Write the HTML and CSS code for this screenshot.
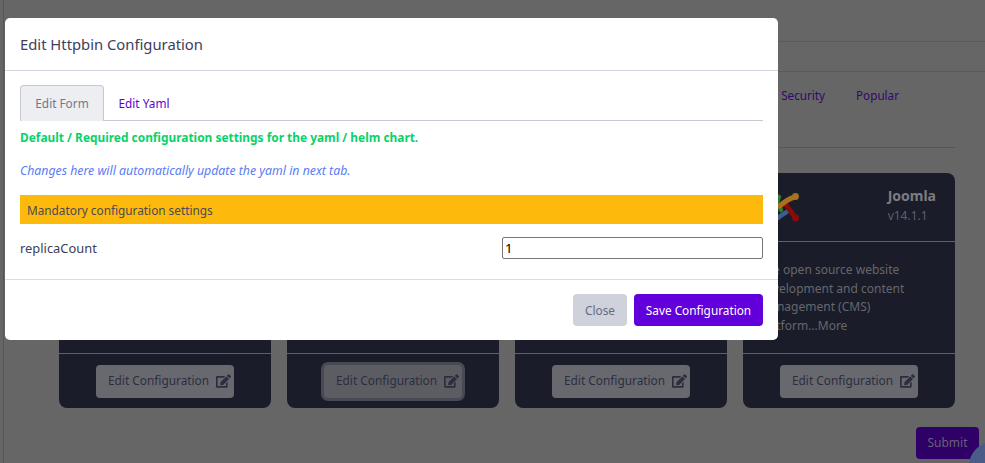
FILE: index.html
```html
<!DOCTYPE html>
<html lang="en">
<head>
<meta charset="utf-8">
<title>Edit Httpbin Configuration</title>
<link rel="stylesheet" href="styles.css">
</head>
<body>
<div class="page">
  <div class="rail"></div>
  <main class="main">
    <div class="topbar"></div>
    <div class="subbar"></div>
    <nav class="filters">
      <a>Security</a>
      <a>Popular</a>
    </nav>
    <div class="cards">
      <article class="card">
        <div class="card-head"></div>
        <div class="card-body"></div>
        <div class="card-foot"><button class="edit">Edit Configuration <svg class="edit-icon" viewBox="0 0 576 512"><use href="#pen"/></svg></button></div>
      </article>
      <article class="card">
        <div class="card-head"></div>
        <div class="card-body"></div>
        <div class="card-foot"><button class="edit focused">Edit Configuration <svg class="edit-icon" viewBox="0 0 576 512"><use href="#pen"/></svg></button></div>
      </article>
      <article class="card">
        <div class="card-head"></div>
        <div class="card-body"></div>
        <div class="card-foot"><button class="edit">Edit Configuration <svg class="edit-icon" viewBox="0 0 576 512"><use href="#pen"/></svg></button></div>
      </article>
      <article class="card">
        <div class="card-head">
          <svg class="logo" viewBox="0 0 34 34" fill="none" stroke-linecap="round">
            <path d="M13 6 C10 10 12 15 15 19" stroke="#2f7a2c" stroke-width="4.5"/>
            <path d="M12 27 C14 25 18 23 22 20" stroke="#3a5f8c" stroke-width="4.5"/>
            <path d="M20 14 L26 22 C27 24 28 26 30 27" stroke="#8c0a0a" stroke-width="5"/>
            <path d="M14 15 C18 11 22 8 29 6" stroke="#a8701f" stroke-width="5"/>
            <circle cx="29.5" cy="5.5" r="3.4" fill="#a8701f"/>
            <circle cx="29.5" cy="27" r="3.4" fill="#8c0a0a"/>
          </svg>
          <div class="card-title"><strong>Joomla</strong><span>v14.1.1</span></div>
        </div>
        <div class="card-body">The open source website development and content management (CMS) platform...More</div>
        <div class="card-foot"><button class="edit">Edit Configuration <svg class="edit-icon" viewBox="0 0 576 512"><use href="#pen"/></svg></button></div>
      </article>
    </div>
    <div class="actions"><button class="submit">Submit</button></div>
  </main>
  <div class="fab"></div>
</div>

<div class="modal">
  <header class="modal-head">Edit Httpbin Configuration</header>
  <div class="modal-body">
    <ul class="tabs">
      <li class="tab active">Edit Form</li>
      <li class="tab">Edit Yaml</li>
    </ul>
    <p class="note-required">Default / Required configuration settings for the yaml / helm chart.</p>
    <p class="note-info">Changes here will automatically update the yaml in next tab.</p>
    <div class="section-bar">Mandatory configuration settings</div>
    <div class="field">
      <label class="field-label" for="replica">replicaCount</label>
      <input class="field-input" id="replica" type="text" value="1">
    </div>
  </div>
  <footer class="modal-foot">
    <button class="btn btn-close">Close</button>
    <button class="btn btn-save">Save Configuration</button>
  </footer>
</div>

<svg class="defs" width="0" height="0"><defs><path id="pen" fill="currentColor" d="M402.6 83.2l90.2 90.2c3.8 3.8 3.8 10 0 13.8L274.4 405.6l-92.8 10.3c-12.4 1.4-22.9-9.1-21.5-21.5l10.3-92.8L388.8 83.2c3.8-3.8 10-3.8 13.8 0zm162-22.9l-48.8-48.8c-15.2-15.2-39.9-15.2-55.2 0l-35.4 35.4c-3.8 3.8-3.8 10 0 13.8l90.2 90.2c3.8 3.8 10 3.8 13.8 0l35.4-35.4c15.2-15.3 15.2-40 0-55.2zM384 346.2V448H64V128h229.8c3.2 0 6.2-1.3 8.5-3.5l40-40c7.6-7.6 2.2-20.5-8.5-20.5H48C21.5 64 0 85.5 0 112v352c0 26.5 21.5 48 48 48h352c26.5 0 48-21.5 48-48V306.2c0-10.7-12.9-16-20.5-8.5l-40 40c-2.2 2.3-3.5 5.3-3.5 8.5z"/></defs></svg>
</body>
</html>
```

FILE: styles.css
```css
* { box-sizing: border-box; }
html, body { margin: 0; height: 100%; overflow: hidden; }
body {
  background: #666;
  font-family: "Noto Sans", sans-serif;
  font-size: 12px;
  color: #3d405c;
}
button { font: inherit; border: 0; cursor: pointer; }
.defs { position: absolute; }

/* dimmed page behind the dialog */
.page { position: relative; display: flex; height: 463px; overflow: hidden; }
.rail { width: 4px; flex: none; border-right: 1px solid #56565a; }
.main { flex: 1; min-width: 0; display: flex; flex-direction: column; }
.topbar { height: 42px; flex: none; border-bottom: 1px solid #5a5a5a; }
.subbar { height: 30px; flex: none; border-bottom: 1px solid #5a5a5a; }
.filters {
  height: 76px; flex: none; margin: 0 30px 0 0;
  display: flex; justify-content: flex-end; gap: 31px;
  padding: 15px 56px 0 0;
  border-bottom: 1px solid #555;
  font-size: 11.7px; line-height: 16px; color: #33086e;
}
.cards { display: flex; gap: 16px; padding: 25px 0 0 55px; }
.card {
  width: 212px; height: 235px; flex: none;
  display: flex; flex-direction: column;
  background: #1a1c2a; border-radius: 8px;
  color: #67686c;
}
.card-head {
  height: 69px; flex: none; display: flex; justify-content: space-between;
  padding: 13px 19px 0 23px;
  border-bottom: 1px solid #5e5f68;
}
.logo { width: 34px; height: 34px; margin-top: 5px; }
.card-title { display: flex; flex-direction: column; line-height: 20px; margin-left: -1px; }
.card-title strong { font-size: 14px; color: #7c7d80; }
.card-title span { font-size: 12px; color: #5f6066; }
.card-body { height: 112px; flex: none; padding: 19px 18px 0 16px; line-height: 18.6px; border-bottom: 1px solid #5e5f68; font-size: 12px; color: #66676b; }
.card-foot { flex: 1; display: flex; justify-content: center; align-items: flex-start; padding-top: 11px; }
.edit {
  height: 33px; width: 138px; padding: 0 0 3px 12px; border-radius: 4px;
  display: flex; align-items: center; justify-content: flex-start; gap: 7px;
  background: #68696f; color: #2c2e40; font-size: 11.85px;
}
.edit.focused { background: #5c5d63; box-shadow: 0 0 0 3px #474953; }
.edit-icon { width: 15px; height: 14px; flex: none; margin-top: 2px; }
.actions { display: flex; justify-content: flex-end; padding: 19px 6px 0 0; }
.submit { width: 63px; height: 32px; padding: 0 0 2px; border-radius: 4px; background: #2f0065; color: #66617c; }
.fab {
  position: absolute; left: 969px; top: 442px;
  width: 48px; height: 48px; border-radius: 50%;
  background: #4a5d88;
}

/* dialog */
.modal {
  position: absolute; left: 5px; top: 18px;
  width: 773px; height: 322px;
  display: flex; flex-direction: column;
  background: #fff; border-radius: 5px;
}
.modal-head {
  height: 53px; flex: none; padding: 0 15px;
  display: flex; align-items: center;
  font-size: 14.8px; color: #3d405c;
  border-bottom: 1px solid #d5d5e0;
}
.modal-body { flex: 1; padding: 14px 15px 0; }
.tabs {
  list-style: none; margin: 0; padding: 0; height: 36px;
  display: flex; border-bottom: 1px solid #c8c8d2;
}
.tab { width: 80px; height: 36px; line-height: 36px; text-align: center; font-size: 11.8px; color: #5f00d5; }
.tab.active {
  width: 84px;
  background: #edeef1; color: #727789;
  border: 1px solid #c8c8d2; border-bottom: 0;
  border-radius: 4px 4px 0 0; line-height: 35px;
}
.note-required { margin: 7px 0 0; line-height: 18px; font-size: 11.9px; font-weight: 700; color: #08d26a; }
.note-info { margin: 16px 0 0; line-height: 18px; font-size: 12.3px; font-style: italic; color: #5a7cf4; }
.section-bar {
  margin-top: 15px; height: 29px; padding: 0 7px;
  display: flex; align-items: center;
  background: #feb90d; font-size: 11.8px; color: #4a4a55;
}
.field { display: flex; justify-content: space-between; align-items: center; margin-top: 13px; height: 22px; }
.field-label { font-size: 12.9px; color: #3d405c; }
.field-input {
  width: 261px; height: 22px; padding: 0 2px;
  border: 1px solid #767676; border-radius: 2px;
  font-family: "Noto Sans", sans-serif; font-size: 13.3px; color: #000;
}
.modal-foot {
  height: 61px; flex: none; padding: 14px 15px 0 0;
  display: flex; justify-content: flex-end; align-items: flex-start; gap: 7px;
  border-top: 1px solid #dcdcdc;
}
.btn { height: 32px; border-radius: 4px; font-size: 11.8px; }
.btn-close { width: 54px; background: #cfd2db; color: #666a82; }
.btn-save { width: 129px; background: #6200dc; color: #fff; }
```
